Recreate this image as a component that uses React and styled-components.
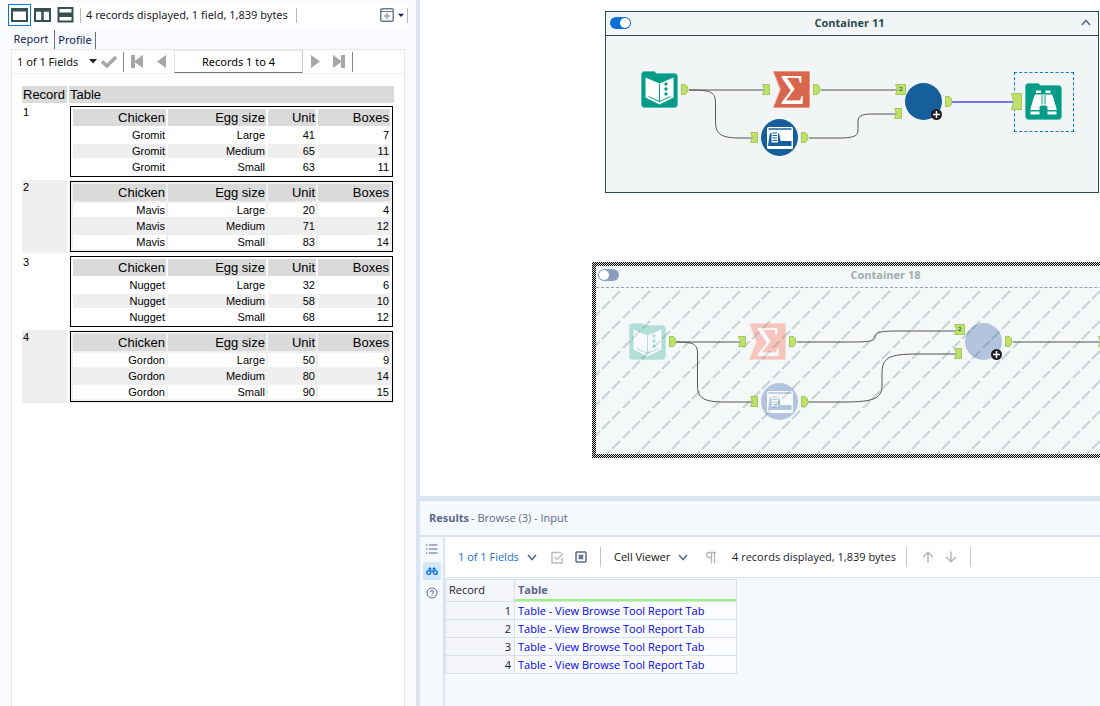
import React from "react";
import styled, { createGlobalStyle, css } from "styled-components";

const ui = `"Open Sans", "Noto Sans", sans-serif`;

const Global = createGlobalStyle`
  * { box-sizing: border-box; }
  body { margin: 0; background: #f5f8fd; font-family: ${ui}; font-size: 11px; line-height: 16px; color: #1b1b2b; }
  button, input, select { font: inherit; color: inherit; margin: 0; padding: 0; border: 0; background: none; }
  svg { display: block; flex: none; }
`;

const Page = styled.div`
  display: flex;
  min-height: 100vh;
`;

/* ---------- report pane ---------- */

const ReportPane = styled.aside`
  flex: 0 0 420px;
  display: flex;
  flex-direction: column;
  padding: 4px 8px 0;
  background: #f8fafe;
  border-right: 4px solid #dae3f1;
`;

const LayoutBar = styled.div`
  display: flex;
  align-items: center;
  height: 23px;
  padding-bottom: 1px;
  margin-bottom: 3px;
  background: #fff;
  font-family: "Noto Sans", sans-serif;
`;

const LayoutButton = styled.button`
  display: grid;
  place-items: center;
  width: 23px;
  height: 22px;
  border: 1px solid ${(p) => (p.$active ? "#0078d7" : "transparent")};
`;

const Rule = styled.span`
  flex: none;
  width: 1px;
  height: ${(p) => p.$h || 15}px;
  background: ${(p) => p.$c || "#b8b8b8"};
  margin: 0 ${(p) => p.$gap || 5}px;
`;

const Status = styled.span`
  white-space: nowrap;
  ${(p) => p.$fill && css`
    min-width: 207px;
    padding-left: 2px;
  `}
`;

const AddButton = styled.button`
  display: flex;
  align-items: center;
  gap: 4px;
  margin-left: auto;
  padding-right: 3px;
  height: 15px;
  border-right: 1px solid #b8b8b8;
`;

const Tabs = styled.div`
  display: flex;
  align-items: flex-end;
  height: 19px;
`;

const Tab = styled.button`
  height: ${(p) => (p.$active ? 19 : 17)}px;
  width: ${(p) => (p.$active ? 47 : 41)}px;
  padding-bottom: ${(p) => (p.$active ? 1 : 2)}px;
  color: #14224f;
  font-family: "Noto Sans", sans-serif;
  line-height: 14px;
  border-right: 1px solid #6d6d78;
  background: ${(p) => (p.$active ? "#fbfcfe" : "#f5f8fd")};
`;

const TabPanel = styled.div`
  flex: 1;
  margin: 0 3px;
  background: #fff;
  border: 1px solid #e6e8ec;
  border-bottom: 0;
`;

const PagerBar = styled.div`
  display: flex;
  align-items: center;
  height: 24px;
  border-bottom: 1px solid #f0f0f0;
`;

const FieldPicker = styled.div`
  display: flex;
  align-items: center;
  padding-left: 5px;
`;

const Select = styled.select`
  appearance: none;
  width: ${(p) => p.$w}px;
  color: ${(p) => p.$c || "#111"};
  font-family: ${(p) => p.$font || ui};
  cursor: pointer;
`;

const IconButton = styled.button`
  display: grid;
  place-items: center;
  width: ${(p) => p.$w || 24}px;
  height: 22px;
  color: ${(p) => p.$c || "#a6a6a6"};
`;

const PageRange = styled.input`
  width: 129px;
  height: 23px;
  text-align: center;
  color: #000;
  font-family: "Noto Sans", sans-serif;
  border: 1px solid #e4e4e4;
  border-bottom-color: #777;
  border-right-color: #ccc;
`;

const Report = styled.table`
  margin: 10px 8px;
  width: 376px;
  table-layout: fixed;
  border-spacing: 2px;
  font-family: "Liberation Sans", sans-serif;
  color: #000;
`;

const HeadCell = styled.th`
  height: 17px;
  padding: 0 1px;
  background: #dadada;
  font-size: 13px;
  line-height: 17px;
  font-weight: 400;
  text-align: ${(p) => p.$align || "left"};
  width: ${(p) => (p.$w ? p.$w + "px" : "auto")};
`;

const RecordCell = styled.td`
  vertical-align: top;
  padding: 1px;
  font-size: 11px;
  line-height: 13px;
  background: ${(p) => (p.$shade ? "#efefef" : "#fff")};
`;

const Nested = styled.table`
  width: 100%;
  table-layout: fixed;
  border: 1px solid #000;
  border-spacing: 2px;
`;

const Cell = styled.td`
  height: 14px;
  padding: 0 1px;
  text-align: right;
  font-size: 11px;
  line-height: 14px;
  background: ${(p) => (p.$shade ? "#efefef" : "#fff")};
`;

/* ---------- workflow canvas ---------- */

const Main = styled.main`
  flex: 1;
  min-width: 0;
  display: flex;
  flex-direction: column;
`;

const Canvas = styled.section`
  position: relative;
  flex: 1;
  min-height: 470px;
  overflow: hidden;
  background: #fff;
`;

const Container = styled.div`
  position: absolute;
  left: ${(p) => p.$x}px;
  right: ${(p) => p.$right}px;
  top: ${(p) => p.$y}px;
  height: ${(p) => p.$h}px;
  display: flex;
  flex-direction: column;
  ${(p) =>
    p.$off
      ? css`
          padding: 4px;
          background: repeating-conic-gradient(#000 0 25%, #d8d8d8 0 50%) 0 0 / 2px 2px;
        `
      : css`
          border: 1px solid #2c4a4f;
        `}
`;

const ContainerHead = styled.header`
  display: flex;
  align-items: center;
  height: ${(p) => (p.$off ? 22 : 24)}px;
  padding: ${(p) => (p.$off ? "0 0 4px 2px" : "0 0 2px 4px")};
  background: ${(p) => (p.$off ? "#f4f8f9" : "#f1f5f6")};
  border-bottom: 1px ${(p) => (p.$off ? "dashed #8fa3a3" : "solid #2c4a4f")};
`;

const ContainerTitle = styled.h2`
  flex: 1;
  margin: 0;
  text-align: center;
  font-size: 11px;
  font-weight: 700;
  color: ${(p) => (p.$off ? "#a0acac" : "#2c4a4f")};
`;

const Collapse = styled.button`
  width: 30px;
  padding-left: 13px;
  color: #5a6a92;
`;

const ContainerBody = styled.div`
  flex: 1;
  background: ${(p) => (p.$off ? "#f4f8f9" : "#f1f5f6")};
`;

const Toggle = styled.input`
  appearance: none;
  width: 21px;
  height: 12px;
  border-radius: 6px;
  background: #8b9dbf;
  display: flex;
  align-items: center;
  padding: 0 1px;
  &::before {
    content: "";
    width: 10px;
    height: 10px;
    border-radius: 5px;
    background: #fff;
  }
  &:checked {
    background: #0d6fd6;
    justify-content: flex-end;
  }
`;

const Layer = styled.svg`
  position: absolute;
  left: 0;
  top: 0;
  width: 100%;
  height: 100%;
  pointer-events: none;
`;

const Node = styled.div`
  position: absolute;
  left: ${(p) => p.$x}px;
  top: ${(p) => p.$y}px;
  --teal: #049c89;
  --coral: #d8664c;
  --blue: #175f9c;
  ${(p) =>
    p.$faded &&
    css`
      opacity: 0.3;
      --teal: #1ba88b;
      --coral: #ff4e38;
      --blue: #1f4ea2;
    `}
`;

const Selection = styled.div`
  position: absolute;
  left: 594px;
  top: 72px;
  width: 60px;
  height: 60px;
  border: 1px dashed #0b78d8;
`;

const FolderBase = () => (
  <path
    d="M3.500 .5H13.500L15.500 2.500H33.500Q36.500 2.500 36.500 5.500V33.500Q36.500 36.500 33.500 36.500H3.500Q.5 36.500 .5 33.500V3.500Q.5 .5 3.500 .5Z"
    fill="var(--teal)"
    stroke="#5fbfb2"
  />
);

const InputIcon = () => (
  <svg width="37" height="37" viewBox="0 0 37 37">
    <FolderBase />
    <path d="M4.500 6.500L18.500 12.500 32.500 6.500V26.500L18.500 33.500 4.500 26.500Z" fill="#fff" />
    <path d="M18.500 13V30.500M7.500 25.500L18.500 30.500 29.500 25.500" stroke="var(--teal)" fill="none" />
    <circle cx="25" cy="13" r="1.700" fill="var(--teal)" />
    <circle cx="25" cy="18" r="1.700" fill="var(--teal)" />
    <circle cx="25" cy="23" r="1.700" fill="var(--teal)" />
  </svg>
);

const BrowseIcon = () => (
  <svg width="37" height="37" viewBox="0 0 37 37">
    <FolderBase />
    <path
      d="M11 7.500h5v2.500h-5zM20.500 7.500h5v2.500h-5zM10.500 11.500H26.500Q27.500 11.500 28 14L31.500 25.500V27H22.500V24Q22.500 22.500 20 22.500H17Q14.500 22.500 14.500 24V27H5.500V25.500L9 14Q9.500 11.500 10.500 11.500ZM5.500 28.500h9v3h-9zM22.500 28.500h9v3h-9z"
      fill="#fff"
    />
    <path d="M17 12V21.500M20 12V21.500" stroke="var(--teal)" />
  </svg>
);

const Bleed = styled.svg`
  overflow: visible;
`;

const SummarizeIcon = () => (
  <Bleed width="37" height="37" viewBox="0 0 37 37">
    <path d="M.5 .5H36.500V36.500H.5L7.500 18.500Z" fill="var(--coral)" stroke="#e89a86" />
    <text x="7" y="33" fontFamily="'Liberation Serif', serif" fontSize="43" fill="#fff">Σ</text>
  </Bleed>
);

const TableToolIcon = () => (
  <svg width="37" height="37" viewBox="0 0 37 37">
    <circle cx="18.500" cy="18.500" r="18.500" fill="var(--blue)" />
    <rect x="6" y="8" width="26" height="22" rx="1.500" fill="#fff" />
    <path d="M7.500 10H30.500" stroke="var(--blue)" strokeWidth="1.500" />
    <path d="M7 27L8.500 16Q9 13.500 11 13.500H16Q18 13.500 18.500 16L19.500 22H30.500V27Z" fill="var(--blue)" />
    <path d="M10.500 12.500h6.500v11h-6.500z" fill="#fff" />
    <path d="M11.500 14h4.500M11.500 16.500h4.500M11.500 19h4.500M11.500 21.500h4.500" stroke="var(--blue)" />
  </svg>
);

const CircleIcon = () => (
  <svg width="37" height="37" viewBox="0 0 37 37">
    <circle cx="18.500" cy="18.500" r="18.500" fill="var(--blue)" />
  </svg>
);

const PlusBadge = () => (
  <svg width="11" height="11" viewBox="0 0 11 11">
    <circle cx="5.500" cy="5.500" r="5.500" fill="#1f1f23" />
    <path d="M5.500 2V9M2 5.500H9" stroke="#fff" strokeWidth="1.500" />
  </svg>
);

const PortIn = ({ w = 8, h = 11 }) => (
  <svg width={w} height={h} viewBox={`0 0 ${w} ${h}`}>
    <path d={`M.5 .5H${w - 0.5}V${h - 0.5}H.5L2.500 ${h / 2}Z`} fill="#bfe06a" stroke="#a4c95a" />
  </svg>
);

const PortOut = () => (
  <svg width="8" height="11" viewBox="0 0 8 11">
    <path d="M.5 .5H4.500Q7 2.500 7 5.500T4.500 10.500H.5Z" fill="#bfe06a" stroke="#a4c95a" />
  </svg>
);

const PortMark = styled.span`
  position: absolute;
  left: 4px;
  top: 0;
  font-size: 6px;
  line-height: 11px;
  font-weight: 700;
  color: #2c6a4a;
`;

const MultiPort = () => (
  <>
    <PortIn w={11} />
    <PortMark>2</PortMark>
  </>
);

const nodes = [
  [221, 71, InputIcon], [261, 84, PortOut],
  [342, 84, PortIn], [353, 71, SummarizeIcon], [393, 84, PortOut],
  [330, 132, PortIn], [341, 119, TableToolIcon], [381, 132, PortOut],
  [475, 84, MultiPort], [474, 108, PortIn], [485, 83, CircleIcon], [511, 109, PlusBadge], [525, 96, PortOut],
  [605, 83, BrowseIcon],
];

const fadedNodes = [
  [209, 323, InputIcon, true], [249, 336, PortOut],
  [318, 336, PortIn], [329, 323, SummarizeIcon, true], [369, 336, PortOut],
  [330, 396, PortIn], [341, 383, TableToolIcon, true], [381, 396, PortOut],
  [534, 324, MultiPort], [534, 348, PortIn], [545, 323, CircleIcon, true], [571, 349, PlusBadge], [585, 336, PortOut],
  [678, 336, PortIn],
];

const NodeList = ({ items }) =>
  items.map(([x, y, Icon, faded]) => (
    <Node key={`${x}-${y}`} $x={x} $y={y} $faded={faded}>
      <Icon />
    </Node>
  ));

const Wires = () => (
  <Layer fill="none" stroke="#555">
    <path d="M269 90H346M269 90C292 90 295.500 92 295.500 104V120C295.500 134 300 137.500 318 138H334" />
    <path d="M401 90H478M389 138H418C434 138 438 136 438 130V122C438 116 441 114 452 114H478" />
    <path d="M532 102H594" stroke="#7474f0" strokeWidth="2" />
    <path d="M256 342H321M256 342C274 342 277.500 344 277.500 354V386C277.500 398 284 402 304 402H334" />
    <path d="M377 342H430C450 342 455 341 455 337C455 332 460 331 480 331H537" />
    <path d="M389 402H424C456 402 462 398 462 384V374C462 358 468 354 498 354H537M593 342H680" />
  </Layer>
);

const Hatch = styled.svg`
  width: 100%;
  height: 100%;
`;

const HatchFill = () => (
  <Hatch>
    <defs>
      <pattern id="hatch" x="-2" width="30" height="30" patternUnits="userSpaceOnUse">
        <path
          d="M18 11L26 3M8 21L16 13M-2 31L6 23M28 31L36 23M-2 1L6 -7"
          stroke="#c6d3d2"
          strokeWidth="2"
        />
      </pattern>
    </defs>
    <rect width="100%" height="100%" fill="url(#hatch)" />
  </Hatch>
);

/* ---------- results pane ---------- */

const Results = styled.section`
  display: flex;
  flex-direction: column;
  min-height: 210px;
  background: #f5f8fd;
  border-top: 5px solid #dae3f1;
`;

const ResultsHead = styled.header`
  display: flex;
  align-items: center;
  gap: 2px;
  height: 36px;
  padding-left: 9px;
  color: #5b6787;
  border-bottom: 2px solid #dae3f1;
`;

const ResultsTitle = styled.h2`
  margin: 0;
  font-size: 11px;
  font-weight: 700;
`;

const ResultsBody = styled.div`
  flex: 1;
  display: flex;
`;

const SideBar = styled.nav`
  flex: 0 0 25px;
  display: flex;
  flex-direction: column;
  align-items: center;
  gap: 4px;
  padding-top: 3px;
  border-right: 2px solid #dae3f1;
`;

const SideButton = styled.button`
  display: grid;
  place-items: center;
  width: 18px;
  height: 18px;
  border-radius: 2px;
  background: ${(p) => (p.$active ? "#cfe6fd" : "none")};
`;

const Sheet = styled.div`
  flex: 1;
  min-width: 0;
`;

const SheetBar = styled.div`
  display: flex;
  align-items: center;
  height: 41px;
  padding-left: 13px;
  background: #fff;
  border-bottom: 1px solid #dae3f1;
`;

const Grid = styled.table`
  width: 292px;
  margin-top: 1px;
  table-layout: fixed;
  border-collapse: collapse;
  td, th {
    border: 1px solid #d8e0ee;
    height: 18px;
    padding: 0 3px;
    line-height: 16px;
    font-weight: 400;
    text-align: left;
    background: #fafcff;
  }
  th { background: #f5f6fb; }
  tbody th { text-align: right; }
`;

const RecordHead = styled.th`
  width: 69px;
  && { height: 22px; padding-bottom: 2px; }
`;

const FieldHead = styled.th`
  && {
    box-shadow: inset 0 -2px #98f47c;
    padding-bottom: 2px;
    font-weight: 700;
    color: #5b6787;
  }
`;

const Link = styled.a`
  color: #0000f0;
  text-decoration: none;
`;

/* ---------- small icons ---------- */

const Caret = ({ c = "#222", w = 8 }) => (
  <svg width={w} height="5" viewBox="0 0 8 5"><path d="M0 0H8L4 4.500Z" fill={c} /></svg>
);
const Chevron = ({ up, c = "#5b6787" }) => (
  <svg width="10" height="7" viewBox="0 0 10 7">
    <path d={up ? "M1 6L5 1.500 9 6" : "M1 1L5 5.500 9 1"} fill="none" stroke={c} strokeWidth="1.500" />
  </svg>
);
const PaneIcon = ({ kind }) => (
  <svg width="17" height="16" viewBox="0 0 17 16" fill="none" stroke="#35504f">
    {kind === "one" && <><rect x="1" y="2" width="15" height="12" strokeWidth="2" /><path d="M1 3.500H16" strokeWidth="2" /></>}
    {kind === "cols" && <><rect x="1" y="2" width="15" height="12" strokeWidth="2" /><path d="M1 3.500H16M8.500 2V14" strokeWidth="2.500" /></>}
    {kind === "rows" && <><path d="M1.500 1H15.500V6.500H1.500ZM1.500 9H15.500V14.500H1.500Z" strokeWidth="2" /><path d="M1 8H16" strokeWidth="2" /></>}
  </svg>
);

const records = [
  ["Gromit", [41, 7], [65, 11], [63, 11]],
  ["Mavis", [20, 4], [71, 12], [83, 14]],
  ["Nugget", [32, 6], [58, 10], [68, 12]],
  ["Gordon", [50, 9], [80, 14], [90, 15]],
];
const sizes = ["Large", "Medium", "Small"];

const EggTable = ({ name, rows }) => (
  <Nested>
    <thead>
      <tr>
        <HeadCell $align="right" $w={93}>Chicken</HeadCell>
        <HeadCell $align="right" $w={98}>Egg size</HeadCell>
        <HeadCell $align="right" $w={48}>Unit</HeadCell>
        <HeadCell $align="right">Boxes</HeadCell>
      </tr>
    </thead>
    <tbody>
      {rows.map(([unit, boxes], i) => (
        <tr key={i}>
          {[name, sizes[i], unit, boxes].map((v, j) => (
            <Cell key={j} $shade={i === 1}>{v}</Cell>
          ))}
        </tr>
      ))}
    </tbody>
  </Nested>
);

export default function App() {
  return (
    <>
      <Global />
      <Page>
        <ReportPane>
          <LayoutBar>
            <LayoutButton $active aria-label="Single pane"><PaneIcon kind="one" /></LayoutButton>
            <LayoutButton aria-label="Side by side"><PaneIcon kind="cols" /></LayoutButton>
            <LayoutButton aria-label="Stacked"><PaneIcon kind="rows" /></LayoutButton>
            <Rule $gap={3} />
            <Status $fill>4 records displayed, 1 field, 1,839 bytes</Status>
            <Rule />
            <AddButton aria-label="New window">
              <svg width="14" height="14" viewBox="0 0 14 14" fill="none" stroke="#6c7a8c">
                <rect x=".75" y=".75" width="12.500" height="12.500" rx="1.500" strokeWidth="1.500" />
                <path d="M1 3.500H13M7 5V11M4 8H10" />
              </svg>
              <Caret c="#14224f" w={6} />
            </AddButton>
          </LayoutBar>
          <Tabs role="tablist">
            <Tab role="tab" aria-selected="true" $active>Report</Tab>
            <Tab role="tab" aria-selected="false">Profile</Tab>
          </Tabs>
          <TabPanel role="tabpanel">
            <PagerBar>
              <FieldPicker>
                <Select $w={72} $font={`"Noto Sans", sans-serif`} aria-label="Fields">
                  <option>1 of 1 Fields</option>
                </Select>
                <Caret />
              </FieldPicker>
              <IconButton aria-label="Apply">
                <svg width="16" height="13" viewBox="0 0 16 13"><path d="M1 6.500L6 11 15 2" fill="none" stroke="currentColor" strokeWidth="3.500" /></svg>
              </IconButton>
              <Rule $h={20} $c="#888" $gap={2} />
              <IconButton $w={22} aria-label="First">
                <svg width="12" height="13" viewBox="0 0 12 13" fill="currentColor"><path d="M0 0H4V13H0ZM12 0V13L3 6.500Z" /></svg>
              </IconButton>
              <IconButton $w={26} aria-label="Previous">
                <svg width="9" height="13" viewBox="0 0 9 13" fill="currentColor"><path d="M9 0V13L0 6.500Z" /></svg>
              </IconButton>
              <PageRange aria-label="Record range" defaultValue="Records 1 to 4" />
              <IconButton aria-label="Next">
                <svg width="9" height="13" viewBox="0 0 9 13" fill="currentColor"><path d="M0 0V13L9 6.500Z" /></svg>
              </IconButton>
              <IconButton aria-label="Last">
                <svg width="12" height="13" viewBox="0 0 12 13" fill="currentColor"><path d="M12 0H8V13H12ZM0 0V13L9 6.500Z" /></svg>
              </IconButton>
              <Rule $h={20} $c="#888" $gap={1} />
            </PagerBar>
            <Report>
              <thead>
                <tr>
                  <HeadCell $w={45}>Record</HeadCell>
                  <HeadCell>Table</HeadCell>
                </tr>
              </thead>
              <tbody>
                {records.map(([name, ...rows], i) => (
                  <tr key={name}>
                    <RecordCell $shade={i % 2 === 1}>{i + 1}</RecordCell>
                    <RecordCell $shade={i % 2 === 1}><EggTable name={name} rows={rows} /></RecordCell>
                  </tr>
                ))}
              </tbody>
            </Report>
          </TabPanel>
        </ReportPane>

        <Main>
          <Canvas>
            <Container $x={185} $right={1} $y={11} $h={182}>
              <ContainerHead>
                <Toggle type="checkbox" defaultChecked aria-label="Enable Container 11" />
                <ContainerTitle>Container 11</ContainerTitle>
                <Collapse aria-label="Collapse"><Chevron up /></Collapse>
              </ContainerHead>
              <ContainerBody />
            </Container>
            <Container $off $x={172} $right={-86} $y={262} $h={196}>
              <ContainerHead $off>
                <Toggle type="checkbox" aria-label="Enable Container 18" />
                <ContainerTitle $off>Container 18</ContainerTitle>
                <Collapse aria-label="Collapse"><Chevron up /></Collapse>
              </ContainerHead>
              <ContainerBody $off><HatchFill /></ContainerBody>
            </Container>
            <Wires />
            <Selection />
            <NodeList items={nodes} />
            <Node $x={591} $y={93}><PortIn w={11} h={17} /></Node>
            <NodeList items={fadedNodes} />
          </Canvas>

          <Results>
            <ResultsHead>
              <ResultsTitle>Results</ResultsTitle>
              <span>- Browse (3) - Input</span>
            </ResultsHead>
            <ResultsBody>
              <SideBar>
                <SideButton aria-label="Messages">
                  <svg width="12" height="10" viewBox="0 0 12 10" stroke="#5b6787" strokeWidth="1.200">
                    <path d="M0 1H1.500M0 5H1.500M0 9H1.500M3 1H11.500M3 5H11.500M3 9H11.500" />
                  </svg>
                </SideButton>
                <SideButton $active aria-label="Browse">
                  <svg width="12" height="9" viewBox="0 0 12 9" fill="none" stroke="#0d6fd6">
                    <circle cx="2.700" cy="5.500" r="1.900" strokeWidth="1.400" />
                    <circle cx="9.300" cy="5.500" r="1.900" strokeWidth="1.400" />
                    <path d="M2.500 2.500L4 1.200 5 2.500M9.500 2.500L8 1.200 7 2.500M4.500 4H7.500" strokeWidth="1.600" />
                  </svg>
                </SideButton>
                <SideButton aria-label="Help">
                  <svg width="12" height="12" viewBox="0 0 12 12" fill="none" stroke="#5b6787">
                    <circle cx="6" cy="6" r="5" />
                    <path d="M4.500 5Q4.500 3.500 6 3.500T7.500 5Q7.500 5.700 6 6.500V7M6 8V9" />
                  </svg>
                </SideButton>
              </SideBar>
              <Sheet>
                <SheetBar>
                  <Select $w={69} $c="#1a6fd0" aria-label="Result fields"><option>1 of 1 Fields</option></Select>
                  <Chevron />
                  <Rule $c="transparent" $gap={4} />
                  <IconButton $w={23} aria-label="Select all">
                    <svg width="13" height="13" viewBox="0 0 13 13" fill="none" stroke="#bdbdbd" strokeWidth="1.500">
                      <path d="M10 1.500H1V12H11V7M3.500 6L6 8.500 12 2.500" />
                    </svg>
                  </IconButton>
                  <IconButton $w={23} aria-label="Deselect all">
                    <svg width="12" height="12" viewBox="0 0 12 12" fill="none" stroke="#5b6787" strokeWidth="1.500">
                      <rect x="1" y="1" width="10" height="10" rx="1" />
                      <path d="M4 4L8 8M8 4L4 8" strokeWidth="2" />
                    </svg>
                  </IconButton>
                  <Rule $h={20} $c="#bcc6da" $gap={8} />
                  <Rule $c="transparent" $gap={2} />
                  <Select $w={64} aria-label="Viewer"><option>Cell Viewer</option></Select>
                  <Chevron />
                  <Rule $c="transparent" $gap={5} />
                  <IconButton aria-label="Show whitespace">
                    <svg width="12" height="13" viewBox="0 0 12 13" fill="none" stroke="#b5b5b5">
                      <path d="M11 1.500H4Q1.500 1.500 1.500 4T4 6.500H6.500M6.500 1V12.500M9.500 1V12.500" strokeWidth="1.300" />
                    </svg>
                  </IconButton>
                  <Rule $c="transparent" $gap={4} />
                  <Status>4 records displayed, 1,839 bytes</Status>
                  <Rule $h={20} $c="#bcc6da" $gap={10} />
                  <IconButton $w={22} aria-label="Previous record">
                    <svg width="12" height="12" viewBox="0 0 12 12" fill="none" stroke="#b5b5b5" strokeWidth="1.500"><path d="M6 11.500V1.500M1 6L6 1.200 11 6" /></svg>
                  </IconButton>
                  <IconButton aria-label="Next record">
                    <svg width="12" height="12" viewBox="0 0 12 12" fill="none" stroke="#b5b5b5" strokeWidth="1.500"><path d="M6 .5V10.500M1 6L6 10.800 11 6" /></svg>
                  </IconButton>
                  <Rule $h={20} $c="#bcc6da" $gap={7} />
                </SheetBar>
                <Grid>
                  <thead>
                    <tr><RecordHead>Record</RecordHead><FieldHead>Table</FieldHead></tr>
                  </thead>
                  <tbody>
                    {records.map((r, i) => (
                      <tr key={r[0]}>
                        <th>{i + 1}</th>
                        <td><Link href="#report">Table - View Browse Tool Report Tab</Link></td>
                      </tr>
                    ))}
                  </tbody>
                </Grid>
              </Sheet>
            </ResultsBody>
          </Results>
        </Main>
      </Page>
    </>
  );
}
